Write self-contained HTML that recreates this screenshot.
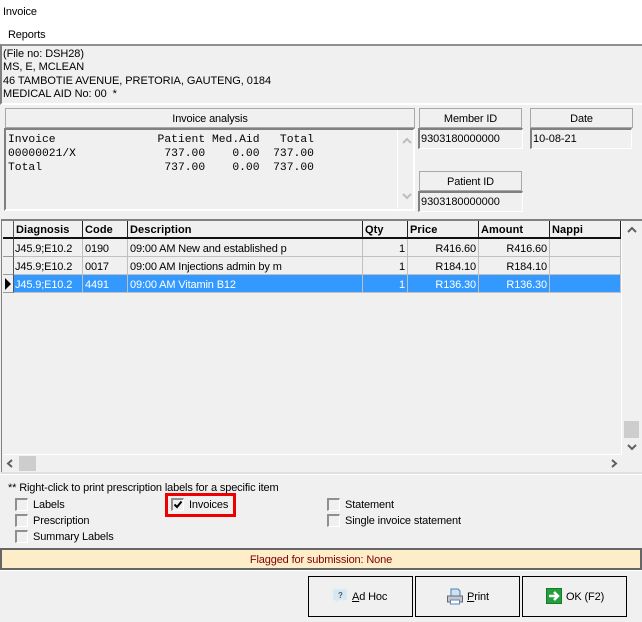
<!DOCTYPE html>
<html><head><meta charset="utf-8"><style>
html,body{margin:0;padding:0;background:#f0f0f0}
#p{position:relative;width:642px;height:622px;overflow:hidden;background:#f0f0f0;font:11px/14px "Liberation Sans",sans-serif;letter-spacing:-.14px;color:#000}
#p div{position:absolute;box-sizing:border-box}
.t{white-space:pre;margin-top:1px}
.r{text-align:right}
.btn{background:#f0f0f0;border:1px solid #a8a8a8;text-align:center;line-height:20px}
.box{background:#f0f0f0;border:1px solid #fff;border-top:2px solid #808080;border-left:2px solid #808080;padding-left:1px;line-height:18px;letter-spacing:-.05px}
.h{font-weight:bold;letter-spacing:.1px}
.hc{background:#f0f0f0;border-right:1px solid #222;height:18px;top:221px;padding-left:2px;line-height:19px;border-bottom:2px solid #111}
.cb{width:13px;height:13px;background:#f0f0f0;border:1px solid #fff;border-top:2px solid #909090;border-left:2px solid #909090}
.bt{border:1px solid #000;top:576px;height:41px;background:#f0f0f0}
.v{background:#c0c0c0}
</style></head><body><div id="p">
<div style="left:0;top:0;width:642px;height:44px;background:#fff"></div>
<div class="t" style="left:3px;top:4px">Invoice</div>
<div class="t" style="left:8px;top:27px">Reports</div>

<div style="left:0;top:44px;width:642px;height:61px;border-top:2px solid #909090;border-left:2px solid #808080;border-bottom:2px solid #fff"></div>
<div class="t" style="left:3px;top:47px;line-height:13.4px;letter-spacing:-.06px">(File no: DSH28)
MS, E, MCLEAN
46 TAMBOTIE AVENUE, PRETORIA, GAUTENG, 0184
MEDICAL AID No: 00  *</div>

<div class="btn" style="left:5px;top:108px;width:410px;height:20px">Invoice analysis</div>
<div style="left:4px;top:128px;width:411px;height:83px;border-top:2px solid #808080;border-left:2px solid #808080;border-bottom:2px solid #fff;border-right:2px solid #fff"></div>
<div class="t" style="left:8px;top:132px;letter-spacing:0;font:11.33px/14px 'Liberation Mono',monospace">Invoice               Patient Med.Aid   Total
00000021/X             737.00    0.00  737.00
Total                  737.00    0.00  737.00</div>
<div style="left:397px;top:130px;width:1px;height:79px;background:#fff"></div>
<svg style="position:absolute;left:400px;top:134px" width="14" height="70"><path d="M3 9l4-4 4 4M3 60l4 4 4-4" fill="none" stroke="#bdbdbd" stroke-width="2"/></svg>

<div class="btn" style="left:419px;top:108px;width:103px;height:20px">Member ID</div>
<div class="box" style="left:418px;top:128px;width:105px;height:21px">9303180000000</div>
<div class="btn" style="left:530px;top:108px;width:103px;height:20px">Date</div>
<div class="box" style="left:530px;top:128px;width:102px;height:21px">10-08-21</div>
<div class="btn" style="left:419px;top:171px;width:103px;height:20px">Patient ID</div>
<div class="box" style="left:418px;top:191px;width:105px;height:21px">9303180000000</div>

<div style="left:1px;top:219px;width:641px;height:2px;background:#808080"></div>
<div style="left:1px;top:219px;width:1px;height:254px;background:#808080"></div>
<div style="left:3px;top:221px;width:619px;height:234px;border-right:1px solid #fff;border-bottom:1px solid #fff"></div>
<div style="left:1px;top:472px;width:641px;height:2px;background:#e0e0e0"></div>
<div style="left:0;top:474px;width:642px;height:1px;background:#fff"></div>

<div class="hc" style="left:3px;width:11px;border-right-color:#555"></div>
<div class="hc h" style="left:14px;width:69px">Diagnosis</div>
<div class="hc h" style="left:83px;width:45px">Code</div>
<div class="hc h" style="left:128px;width:235px">Description</div>
<div class="hc h" style="left:363px;width:45px">Qty</div>
<div class="hc h" style="left:408px;width:71px">Price</div>
<div class="hc h" style="left:479px;width:71px">Amount</div>
<div class="hc h" style="left:550px;width:71px">Nappi</div>

<div style="left:3px;top:239px;width:11px;height:18px;background:#f0f0f0;border-right:1px solid #555;border-bottom:1px solid #999"></div>
<div style="left:3px;top:257px;width:11px;height:18px;border-right:1px solid #555;border-bottom:1px solid #999"></div>
<div style="left:3px;top:275px;width:11px;height:18px;border-right:1px solid #555;border-bottom:1px solid #999"></div>
<svg style="position:absolute;left:5px;top:278px" width="8" height="12"><path d="M0 0l6 6-6 6z" fill="#000"/></svg>

<div style="left:14px;top:275px;width:606px;height:18px;background:#3399ff"></div>
<div style="left:14px;top:256px;width:607px;height:1px;background:#c0c0c0"></div>
<div style="left:14px;top:274px;width:607px;height:1px;background:#c0c0c0"></div>
<div style="left:14px;top:292px;width:607px;height:1px;background:#c0c0c0"></div>
<div class="v" style="left:82px;top:239px;width:1px;height:54px"></div>
<div class="v" style="left:127px;top:239px;width:1px;height:54px"></div>
<div class="v" style="left:362px;top:239px;width:1px;height:54px"></div>
<div class="v" style="left:407px;top:239px;width:1px;height:54px"></div>
<div class="v" style="left:478px;top:239px;width:1px;height:54px"></div>
<div class="v" style="left:549px;top:239px;width:1px;height:54px"></div>
<div class="v" style="left:620px;top:239px;width:1px;height:54px"></div>

<div class="t" style="left:15px;top:241px">J45.9;E10.2</div>
<div class="t" style="left:85px;top:241px">0190</div>
<div class="t" style="left:130px;top:241px">09:00 AM New and established p</div>
<div class="t r" style="left:363px;width:42px;top:241px">1</div>
<div class="t r" style="left:408px;width:68px;top:241px">R416.60</div>
<div class="t r" style="left:479px;width:68px;top:241px">R416.60</div>

<div class="t" style="left:15px;top:259px">J45.9;E10.2</div>
<div class="t" style="left:85px;top:259px">0017</div>
<div class="t" style="left:130px;top:259px">09:00 AM Injections admin by m</div>
<div class="t r" style="left:363px;width:42px;top:259px">1</div>
<div class="t r" style="left:408px;width:68px;top:259px">R184.10</div>
<div class="t r" style="left:479px;width:68px;top:259px">R184.10</div>

<div class="t" style="left:15px;top:277px;color:#fff">J45.9;E10.2</div>
<div class="t" style="left:85px;top:277px;color:#fff">4491</div>
<div class="t" style="left:130px;top:277px;color:#fff">09:00 AM Vitamin B12</div>
<div class="t r" style="left:363px;width:42px;top:277px;color:#fff">1</div>
<div class="t r" style="left:408px;width:68px;top:277px;color:#fff">R136.30</div>
<div class="t r" style="left:479px;width:68px;top:277px;color:#fff">R136.30</div>

<div style="left:624px;top:421px;width:15px;height:17px;background:#cdcdcd"></div>
<div style="left:19px;top:456px;width:17px;height:15px;background:#cdcdcd"></div>
<svg style="position:absolute;left:0;top:0;pointer-events:none" width="642" height="622"><path d="M628 232l4-4 4 4M628 445l4 4 4-4M12 460l-4 3.500 4 3.500M612 460l4 3.500-4 3.500" fill="none" stroke="#606060" stroke-width="2"/></svg>

<div class="t" style="left:8px;top:480px">** Right-click to print prescription labels for a specific item</div>
<div class="cb" style="left:15px;top:498px"></div><div class="t" style="left:33px;top:497px">Labels</div>
<div class="cb" style="left:15px;top:514px"></div><div class="t" style="left:33px;top:513px">Prescription</div>
<div class="cb" style="left:15px;top:530px"></div><div class="t" style="left:33px;top:529px">Summary Labels</div>
<div style="left:165px;top:493px;width:71px;height:24px;border:3px solid #ee0000"></div>
<div class="cb" style="left:171px;top:498px"></div>
<svg style="position:absolute;left:171px;top:498px" width="13" height="13"><path d="M3.500 6.500l2.500 2.500 4.500-5.500" fill="none" stroke="#000" stroke-width="2"/></svg>
<div class="t" style="left:189px;top:497px">Invoices</div>
<div class="cb" style="left:327px;top:498px"></div><div class="t" style="left:345px;top:497px">Statement</div>
<div class="cb" style="left:327px;top:514px"></div><div class="t" style="left:345px;top:513px">Single invoice statement</div>

<div style="left:0;top:548px;width:642px;height:22px;background:#fdedc8;border:2px solid #666;text-align:center;color:#800000;line-height:20px">Flagged for submission: None</div>
<div style="left:0;top:570px;width:642px;height:1px;background:#fff"></div>

<div class="bt" style="left:308px;width:105px"></div>
<div class="bt" style="left:415px;width:105px"></div>
<div class="bt" style="left:522px;width:105px"></div>

<svg style="position:absolute;left:332px;top:588px" width="16" height="16"><path d="M1 1h14v11H7l-3 3v-3H1z" fill="#d4e8f2" stroke="#e4eef4"/><text x="6" y="10" font-size="8" font-weight="bold" fill="#556" font-family="Liberation Sans">?</text></svg>
<div class="t" style="left:352px;top:589px"><u>A</u>d Hoc</div>

<svg style="position:absolute;left:446px;top:588px" width="18" height="17"><path d="M5 1h7l2 2v5H5z" fill="#cfe2f5" stroke="#4d7fb5"/><path d="M1.500 8h15v6h-15z" fill="#c4c8cc" stroke="#667"/><path d="M4.500 12h9v4h-9z" fill="#fff" stroke="#5a86b8"/></svg>
<div class="t" style="left:467px;top:589px"><u>P</u>rint</div>

<svg style="position:absolute;left:546px;top:588px" width="16" height="16"><rect x="0.500" y="0.500" width="15" height="15" fill="#23a03c" stroke="#177a2a"/><path d="M3 8h8M8 4l4 4-4 4" fill="none" stroke="#fff" stroke-width="2.500"/></svg>
<div class="t" style="left:566px;top:589px">OK (F2)</div>
</div></body></html>
